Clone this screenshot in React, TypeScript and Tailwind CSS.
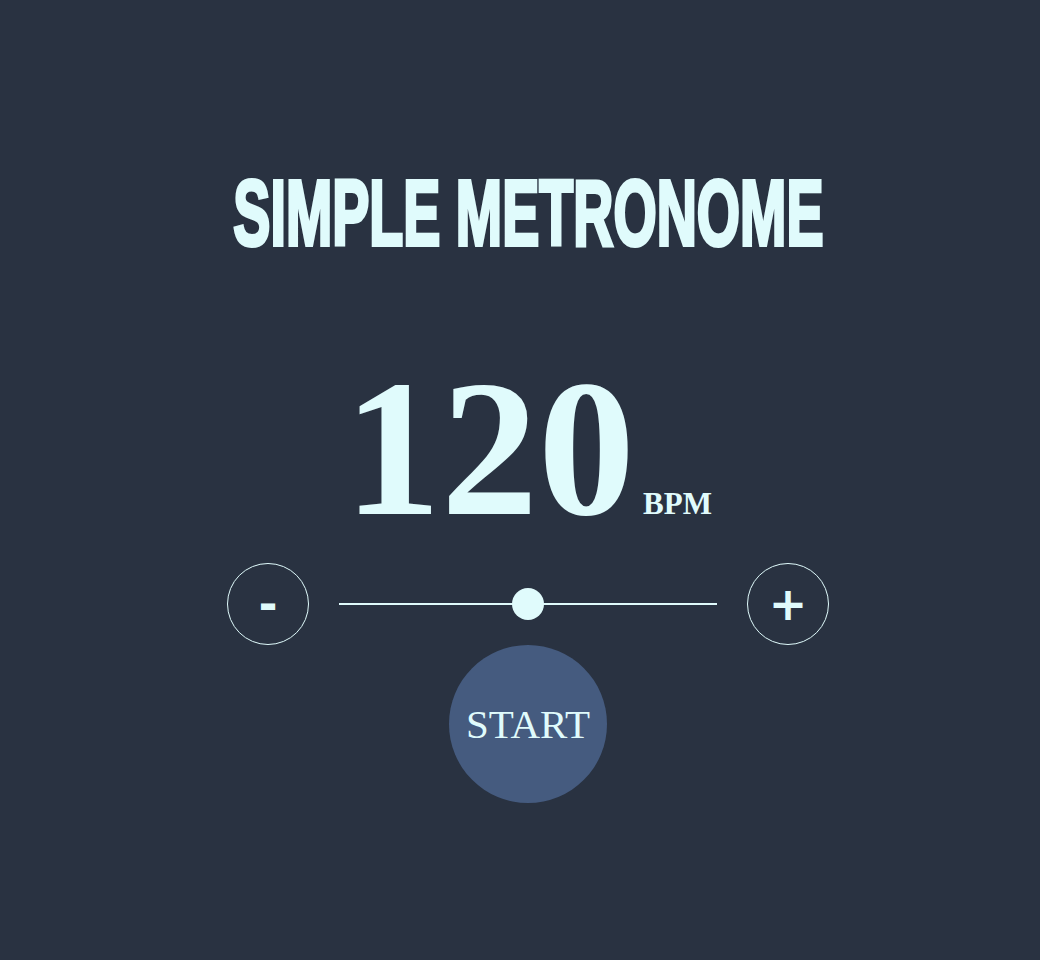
import React, { useState } from "react";

export default function App() {
  const [bpm, setBpm] = useState(120);
  const [running, setRunning] = useState(false);

  const min = 40;
  const max = 200;
  const pct = ((bpm - min) / (max - min)) * 100;

  return (
    <div className="min-h-screen bg-[#293241] text-[#e0fbfc] pl-4 pt-[167px] flex flex-col items-center">
      <h1 className="font-['Liberation_Sans',sans-serif] font-bold text-[93px] leading-none tracking-[0px] uppercase scale-x-[0.598] [-webkit-text-stroke:4px_#e0fbfc] whitespace-nowrap">
        Simple Metronome
      </h1>

      <div className="mt-[92px] flex items-baseline justify-center font-['Liberation_Serif',serif] font-bold">
        <span className="text-[194px] leading-none">{bpm}</span>
        <span className="ml-2 text-[31px] leading-none">BPM</span>
      </div>

      <div className="mt-[17px] flex items-center gap-[30px]">
        <button
          className="w-[82px] h-[82px] rounded-full border border-[#e0fbfc] flex items-center justify-center font-['DejaVu_Sans',sans-serif] font-bold text-[46px] leading-none"
          onClick={() => setBpm((b) => Math.max(min, b - 1))}
        >
          -
        </button>
        <div className="relative w-[378px] h-[32px] flex items-center">
          <div className="w-full h-[2px] bg-[#e0fbfc]" />
          <div
            className="absolute top-0 w-8 h-8 -ml-4 rounded-full bg-[#e0fbfc]"
            style={{ left: `${pct}%` }}
          />
        </div>
        <button
          className="w-[82px] h-[82px] rounded-full border border-[#e0fbfc] flex items-center justify-center font-['DejaVu_Sans',sans-serif] font-bold text-[46px] leading-none"
          onClick={() => setBpm((b) => Math.min(max, b + 1))}
        >
          +
        </button>
      </div>

      <button
        className="w-[158px] h-[158px] rounded-full bg-[#455b7f] flex items-center justify-center font-['Liberation_Serif',serif] text-[41px] leading-none"
        onClick={() => setRunning((r) => !r)}
      >
        {running ? "STOP" : "START"}
      </button>
    </div>
  );
}
